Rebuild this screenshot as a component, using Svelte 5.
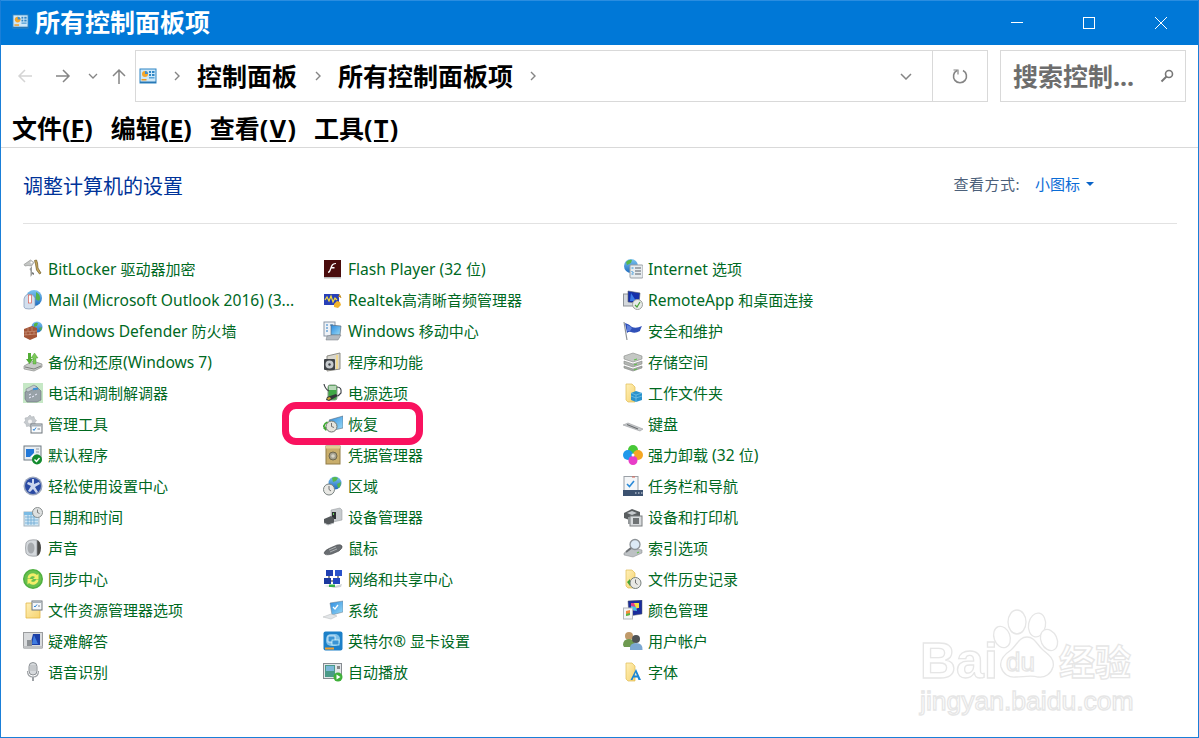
<script>
	const cp = `<rect x="0.5" y="1.5" width="17" height="15" fill="#2f86c6"/><rect x="1.5" y="2.5" width="15" height="13" fill="#cfe8f8"/><circle cx="6" cy="7" r="3" fill="#f4a62a"/><path d="M6 7V4a3 3 0 0 1 3 3z" fill="#3c8ed0"/><rect x="2.5" y="12" width="5" height="1.5" fill="#f09a20"/><rect x="10" y="4" width="2" height="2" fill="#2f86c6"/><rect x="13" y="4" width="2.5" height="2" fill="#2f86c6"/><rect x="10" y="7" width="2" height="2" fill="#2f86c6"/><rect x="13" y="7" width="2.5" height="2" fill="#2f86c6"/><rect x="10" y="10" width="5.5" height="1.5" fill="#5aa5da"/><rect x="1" y="14.5" width="16" height="1.5" fill="#2878b5"/>`;

	const folder = `<path d="M3 1h6l3 3v15H5l-2-2z" fill="url(#gFolder)" stroke="#e0bb55" stroke-width=".7"/>`;
	const clock = (x, y, r) => `<circle cx="${x}" cy="${y}" r="${r}" fill="#e8e8e4" stroke="#77807f" stroke-width="1"/><path d="M${x} ${y - r + 2}V${y}l2 1.5" fill="none" stroke="#555" stroke-width=".8"/>`;

	const icons = {
		bitlocker: `<path d="M1 5.5 7.5 1l3.5 2.5-2.500 3.500L5 6.500 2 7z" fill="#c4c6c4" stroke="#8b8d8b" stroke-width=".6"/><circle cx="8.500" cy="3.500" r="1.100" fill="#fff"/><path d="M11.500 1.500 13.500 1l1 3 .5 5 3 5-1.500 1-3-4-1-6z" fill="#c7a75c" stroke="#6d5a25" stroke-width=".7"/><path d="M9 7v9l-1.500 2V12l-1-2z" fill="#9a9c9a"/><path d="M9 13l2 1v2l-2-1z" fill="#7b7d7b"/>`,
		mail: `<circle cx="11" cy="8" r="8" fill="url(#gBlue)"/><path d="M13 2q4 2 4 6t-3 2q-2-1-1-4z" fill="#55b34b"/><path d="M1 9q0-3 4-5l5 1 2 3v9q-1 2-6 2T1 17z" fill="#d3dfee" stroke="#7f95b5" stroke-width=".7"/><rect x="5.500" y="5" width="3" height="8" fill="#fff" stroke="#d85c50" stroke-width=".7"/>`,
		defender: `<circle cx="14" cy="6" r="5.500" fill="url(#gBlue)"/><path d="M11 3q2-2 4-1l-1 3-3 1zM16 7l3-1-1 4z" fill="#53b347"/><path d="M1 8l8-3 5 2v9l-7 3-6-3z" fill="#a35538"/><path d="M1 11l13-1M1 14l13-1M5 7v3M9 6v4M3 11v3M7 11v3M11 10v3" stroke="#d2a18a" stroke-width=".6" fill="none"/>`,
		backup: `<path d="M1 14l9-5 9 3v3l-8 4-10-2z" fill="#c8cbc8" stroke="#7c7e7c" stroke-width=".6"/><path d="M2 15l9 2 7-3" stroke="#696b69" stroke-width=".8" fill="none"/><path d="M5 1h3v6h2l-3.500 5L3 7h2z" fill="#52ad35"/><path d="M13 12h-3V6H8l3.500-5L15 6h-2z" fill="#7cc95a" stroke="#3f8f28" stroke-width=".4"/>`,
		phone: `<rect width="20" height="20" fill="#c6e8c6"/><path d="M2 9l11-6 5 5v9l-4 2H4l-2-3z" fill="#98a2a8" stroke="#687076" stroke-width=".6"/><path d="M3 6l8-4 4 3-2 2-2-1-6 3-2-1z" fill="#c4ccd0" stroke="#687076" stroke-width=".5"/><rect x="10" y="5" width="5" height="2" transform="rotate(-8 12 6)" fill="#3a92d8"/><path d="M6 12l2-1M9 14l2-1M12 12l2-1M6 15l2-1" stroke="#eef" stroke-width="1"/>`,
		tools: `<path d="M7 1l1.500 2 2.500-.5.5 2.500 2 1.500-1.500 2 .5 2.500-2.500.5L8 13.500 6 12l-2.500.5L3 10 1 8.500l1.500-2L2 4l2.500-.5z" fill="#c6cace" stroke="#a5aaae" stroke-width=".5"/><circle cx="7" cy="7.500" r="2" fill="#f4f4f4"/><rect x="8" y="10" width="11" height="9" fill="#f8fafc" stroke="#6f767c"/><rect x="8.500" y="10.500" width="10" height="2" fill="#a9b1b8"/><path d="M10 15l1 1.500 2-3" stroke="#2f86d8" stroke-width="1" fill="none"/><path d="M14.500 15H17" stroke="#7b8288"/>`,
		defaults: `<rect x="1" y="1" width="17" height="14" fill="#e8edf2" stroke="#6f7a82"/><rect x="3" y="4" width="8" height="8" fill="#2278d8"/><path d="M7 12l4-4v4z" fill="#fff"/><path d="M13 4h3M13 7h3M13 10h2" stroke="#8f9aa3"/><circle cx="14" cy="14.500" r="5" fill="#128b2e"/><path d="M11.500 14.500l2 2 3-3.500" stroke="#fff" stroke-width="1.400" fill="none"/>`,
		ease: `<circle cx="10" cy="10" r="9.500" fill="#9ba6bd"/><circle cx="10" cy="10" r="8" fill="#2a4aa4"/><path d="M9 3h2v5l5-2 1 2-5 3 3 5-2 1-3-4-3 3-2-1 3-5-4-2 1-2 4 1z" fill="#e9eefb" opacity=".85"/>`,
		datetime: `<rect x="1" y="5" width="15" height="14" fill="#cfe6f4" stroke="#a7b6c0"/><rect x="1" y="5" width="15" height="3" fill="#7bbbe4"/><path d="M2 10h13M2 13h13M2 16h13M5 8v10M8 8v10M11 8v10" stroke="#6da9d4" stroke-width=".8"/><circle cx="14.500" cy="5.500" r="5" fill="#dde0e0" stroke="#8a8f8f"/><path d="M14.500 2.500v3l2 1" stroke="#666" fill="none" stroke-width=".8"/>`,
		sound: `<ellipse cx="13.500" cy="10" rx="4.500" ry="8" fill="#4a4a48"/><path d="M14 2Q5 1 3 5q-1 5 0 10 2 4 11 3z" fill="#d4d8dc" stroke="#8c9095" stroke-width=".7"/><ellipse cx="8" cy="10" rx="3.500" ry="5.500" fill="#a6aaae"/>`,
		sync: `<circle cx="10" cy="10" r="10" fill="#4fb040"/><circle cx="10" cy="10" r="8.500" fill="#68c04e"/><path d="M4.500 9.500A5.500 5.500 0 0 1 14 6l1.500-1.500V10H10l2-2a3 3 0 0 0-5 1.500z" fill="#f3ee6a"/><path d="M15.500 10.500A5.500 5.500 0 0 1 6 14l-1.500 1.500V10H10l-2 2a3 3 0 0 0 5-1.500z" fill="#f3ee6a"/>`,
		explorer: `<path d="M3 3h14v15H3z" fill="url(#gFolder)" stroke="#e3b848" stroke-width=".8"/><rect x="9" y="1" width="10" height="9" fill="#f4f7fa" stroke="#6f767c"/><rect x="9.500" y="1.500" width="9" height="1.500" fill="#a9b1b8"/><path d="M11 6l1 1 2-2.500" stroke="#2f86d8" fill="none"/><path d="M15 6h2" stroke="#7b8288"/>`,
		trouble: `<rect x="0.500" y="1.500" width="19" height="15" fill="#d9dbdd" stroke="#9b9d9f"/><path d="M10 3h7v11H4l4-3z" fill="#1c3fa6"/><path d="M11 4l4 9h-6z" fill="#3f7be0"/><rect x="4" y="9" width="5" height="7" fill="#8d9195"/><rect x="0.500" y="15" width="19" height="3" fill="#bfc1c3"/>`,
		speech: `<rect x="6" y="0.500" width="8" height="12.500" rx="4" fill="#d7dadd" stroke="#8d9195"/><path d="M7 4h6M7 6h6M7 8h6" stroke="#a6aaae" stroke-width=".7"/><path d="M4.500 9q0 6 5.500 6t5.500-6" fill="none" stroke="#9ea2a6" stroke-width="1.200"/><path d="M10 15v4" stroke="#9ea2a6" stroke-width="2"/>`,
		flash: `<rect x="1" y="1" width="17" height="17" fill="#4a0c0c"/><rect x="1" y="18" width="17" height="1.500" fill="#bbb"/><path d="M13 5q-3 0-4 3l-1.500 4Q7 14 5 14v-1.500q1 0 1.500-1.500l1.500-4q1-3 5-3zM7.500 8h4v1.500h-4z" fill="#fff"/>`,
		realtek: `<rect x="1" y="4" width="15" height="11" fill="#2840b8"/><path d="M2 10l2-3 2 4 2-5 2 6 2-4 2 2" stroke="#f6dc3c" stroke-width="1.200" fill="none"/><path d="M11 14l3-3 3 1 1 3-3 3-4-1z" fill="#f2b32c"/><path d="M16 4l2 4M18 6l-3 1" stroke="#c48a18"/>`,
		mobility: `<rect x="1" y="1" width="11" height="14" fill="#eef2f7" stroke="#8a98a8"/><path d="M3 4h2M3 7h2M3 10h2M7 4h3" stroke="#2a7ec6"/><path d="M8 4l10 1-1 9H8z" fill="url(#gScreen)" stroke="#58606a" stroke-width=".6"/><path d="M4 15l5-1h9l-3 5H3z" fill="#b4bac0" stroke="#747a80" stroke-width=".5"/>`,
		programs: `<path d="M4 4l13-3v16l-13 2z" fill="#d8d6ce" stroke="#8e8d86"/><path d="M14 3v14" stroke="#f0d890" stroke-width="2"/><rect x="1" y="7" width="11" height="11" rx="1" fill="#3f4347"/><circle cx="6.500" cy="12.500" r="4" fill="#c7cbce"/><circle cx="6.500" cy="12.500" r="1.200" fill="#3f4347"/>`,
		power: `<rect x="5" y="2" width="9" height="15" rx="2" fill="#3fa845" stroke="#8a9a8c"/><rect x="6" y="3" width="7" height="4" fill="#b8d8b8"/><path d="M1 1q1 5 5 7M14 4q5 0 4 6l-3 3" stroke="#3f4347" fill="none" stroke-width="1.200"/><path d="M4 14l9-3 2 2-9 5-3-1z" fill="#33373a"/><path d="M4 15l3-1 1 2-3 1z" fill="#c9a53a"/>`,
		recovery: `<path d="M6 6l14-4v12l-9 2z" fill="url(#gScreen)" stroke="#5c6c7c" stroke-width=".6"/><path d="M2 12l-2 2 3 3 1-2z" fill="#3da82f"/><circle cx="8.500" cy="12.500" r="5.500" fill="#e4e4dc" stroke="#6f7570"/><path d="M8.500 9v3.500l2.500 1" stroke="#555" fill="none" stroke-width=".8"/><path d="M0.500 13q1-4 4-5" stroke="#3da82f" stroke-width="1.600" fill="none"/>`,
		credentials: `<rect x="3" y="1" width="14" height="18" fill="#c9ae6c" stroke="#927c46"/><rect x="3" y="1" width="14" height="2.500" fill="#e2cd92"/><circle cx="10" cy="11" r="4" fill="#a4a090" stroke="#70684c"/><circle cx="10" cy="11" r="1.800" fill="#d8d4c4"/>`,
		region: `<circle cx="12" cy="7" r="6.500" fill="url(#gBlue)"/><path d="M9 2q3-2 6 0l-2 3-3 1zM14 8l4-2-1 5-2 1z" fill="#55b74a"/>${clock(6, 13.500, 5.500)}`,
		devices: `<path d="M8 3l9-2 2 2v10l-9 2-2-2z" fill="#c7cbce" stroke="#8e9296" stroke-width=".5"/><rect x="9" y="5" width="4" height="7" fill="#2e3234"/><rect x="10" y="6" width="1" height="2" fill="#69d060"/><path d="M1 12l7-3 3 2v5l-6 2-4-2z" fill="#55595c"/><path d="M1 16l4 2 6-2" stroke="#bfc3c6" fill="none"/>`,
		mouse: `<path d="M1 15q1-3 6-5l7-3q4-1 5 1t-3 5l-7 3q-7 2-8-1z" fill="#6a6e72" stroke="#44484b" stroke-width=".6"/><path d="M6 12l7-3M7 14l7-3" stroke="#a9adb0" stroke-width="1"/>`,
		network: `<rect x="3" y="1" width="7" height="6" fill="#1f3fb2"/><rect x="12" y="1" width="7" height="6" fill="#2a53cc"/><rect x="1" y="9" width="7" height="6" fill="#1b389e"/><rect x="10" y="9" width="7" height="6" fill="#2145bd"/><path d="M6 7v2M15 7v2M8 12h2" stroke="#222"/><path d="M1 17l8-1 3 1 7-2-1 3-7 1-3-1z" fill="#cfd3d6"/><rect x="6" y="15.500" width="6" height="2.500" fill="#35b04a"/>`,
		system: `<path d="M7 3l13-2v11l-11 3z" fill="url(#gScreen)" stroke="#6c7a88" stroke-width=".5"/><path d="M10 7l2 2 3-4" stroke="#fff" stroke-width="1.300" fill="none"/><path d="M0 17l8-3 6 2-6 3z" fill="#e3e6e8" stroke="#b4b8ba" stroke-width=".5"/>`,
		intel: `<rect x="0.500" y="0.500" width="19" height="19" rx="2" fill="#1c80c8"/><rect x="3" y="3" width="14" height="12" rx="5" fill="#7fc0e8"/><rect x="5" y="5" width="7" height="6" fill="#3a94d4" stroke="#fff" stroke-width=".7"/><rect x="9" y="9" width="7" height="5" fill="#3a94d4" stroke="#dff" stroke-width=".7"/><rect x="2" y="16.500" width="9" height="2" fill="#f0a030"/>`,
		autoplay: `<rect x="0.500" y="1.500" width="18" height="15" fill="#e3e6e9" stroke="#878c91"/><rect x="2" y="3" width="10" height="12" fill="#4a9a88"/><rect x="3" y="4" width="8" height="5" fill="#7cb8d8"/><rect x="14" y="4" width="3" height="3" fill="#888"/><circle cx="15" cy="15" r="4.500" fill="#3fb03a"/><path d="M13.500 12.500l4 2.500-4 2.500z" fill="#fff"/>`,
		internet: `<circle cx="8" cy="7" r="7" fill="url(#gBlue)"/><path d="M3 3q3-3 6-2l-1 3-4 2zM8 8l5-1-1 5-3 1z" fill="#57b84a"/><rect x="7" y="6" width="13" height="13" rx="1" fill="#e8ecef" stroke="#9aa0a5"/><path d="M12 9h6M12 12h6M12 15h6" stroke="#58606a"/><path d="M8.500 9h2M8.500 12l2 2M8.500 15h2" stroke="#2a8fd8"/>`,
		remoteapp: `<rect x="0.500" y="4" width="15" height="12" fill="#d4d8dc" stroke="#8e9398"/><path d="M5 1l12 2-1 10-11-1z" fill="#1430aa" stroke="#5a6068" stroke-width=".6"/><path d="M8 3l5 8H7z" fill="#3b7be6"/><circle cx="14.500" cy="14.500" r="5" fill="#e8eae8" stroke="#9da09d"/><path d="M12 15l2 2 3-5" stroke="#4aa23a" stroke-width="1.200" fill="none"/>`,
		security: `<path d="M1 1l3 18" stroke="#8e9398" stroke-width="1.200"/><path d="M2 2q4 1 7 4 4 2 10-1-2 4-2 5-5 3-9 1-2-1-4 1z" fill="#3050b8"/><path d="M4 4q3 1 5 3l-2 3-3 0z" fill="#5f80dc"/>`,
		storage: `<path d="M1 4l9-3 9 3v3l-9 3-9-3z" fill="#c4c7c4" stroke="#878a87" stroke-width=".6"/><path d="M1 9l9 3 9-3v3l-9 3-9-3z" fill="#b2b5b2" stroke="#878a87" stroke-width=".6"/><path d="M1 14l9 3 9-3v2l-9 3-9-3z" fill="#a6a9a6" stroke="#878a87" stroke-width=".6"/><path d="M11 8l3-1M11 13l3-1M11 18l3-1" stroke="#5fc04a" stroke-width="1.200"/>`,
		workfolders: `${folder}<path d="M13 8l6 2v7l-6 2-5-2v-7z" fill="#2a92cc"/><path d="M8 10l5 2 6-2M13 12v7M8 13l5 2 6-2" stroke="#86ccee" stroke-width=".6" fill="none"/>`,
		keyboard: `<path d="M0 11l5-2 15 6-3 2z" fill="#c8cbcd" stroke="#8a8d90" stroke-width=".5"/><path d="M4 10.500l11 4.500" stroke="#6a6d70" stroke-width="1.200"/>`,
		uninstall: `<circle cx="10" cy="5" r="5" fill="#48c838"/><circle cx="5" cy="10" r="5" fill="#1f98ea"/><circle cx="15" cy="10" r="5" fill="#f5a623"/><circle cx="10" cy="15.500" r="4.500" fill="#e83cc8"/><circle cx="10" cy="10" r="1.500" fill="#fff"/>`,
		taskbar: `<rect x="1" y="0.500" width="14" height="15" fill="#f4f6f8" stroke="#9aa0a6"/><path d="M4 8l2.500 2.500L11 5" stroke="#2a8ad8" stroke-width="1.600" fill="none"/><rect x="9" y="0.500" width="3" height="1" fill="#d86050"/><rect y="14" width="20" height="6" fill="#3c5270"/><path d="M12 17h1.500M15 17h1.500M18 17h1.500" stroke="#aab6c6" stroke-width="1.500"/>`,
		printers: `<path d="M1 6l8-4 8 3v6l-8 3-8-3z" fill="#5a5e60"/><path d="M4 6l5-2 5 2-5 2z" fill="#c6cace"/><rect x="7" y="9" width="12" height="10" fill="#d7dadc" stroke="#7a7e80"/><rect x="10" y="11" width="6" height="6" fill="#6e7274"/><rect x="5" y="10" width="2" height="7" fill="#94989a"/>`,
		index: `<path d="M1 15l9-5 9 2v3l-9 4-9-2z" fill="#bdc1c4" stroke="#83878a" stroke-width=".5"/><circle cx="12" cy="6.500" r="5" fill="#dceaf6" stroke="#8d9398" stroke-width="1.300"/><path d="M8 10l-5 4" stroke="#6e7276" stroke-width="2"/><path d="M14 15l2-1" stroke="#5fc04a" stroke-width="1.200"/>`,
		history: `${folder}<path d="M4 13l3-3v2h3v3H7v2z" fill="#3da82f"/>${clock(12.500, 14, 5.500)}`,
		color: `<path d="M5 1l14-1v14l-13 2z" fill="#1a2c9c" stroke="#5a6068" stroke-width=".5"/><path d="M8 3h7v5l-4 3-3-3z" fill="#e23c8c"/><path d="M11 3h5v5h-3z" fill="#f2e040"/><path d="M8 6l5 1 1 4-6-1z" fill="#44c4e4"/><rect x="0.500" y="8" width="9" height="11" fill="#f4f6f8" stroke="#b4b8bc"/><path d="M3 11l4-1v5l-4 1z" fill="#f28c3c"/><path d="M3 14l4-1v2l-4 1z" fill="#52b848"/>`,
		users: `<circle cx="6" cy="5" r="4" fill="#c09a6a"/><path d="M0 14q0-6 6-6t6 6l-1 2H1z" fill="#6e9a50"/><circle cx="13" cy="8" r="4" fill="#4e5256"/><path d="M7 19q-1-7 6-7t6.500 7z" fill="#7ca8d2"/>`,
		fonts: `${folder}<path d="M13 7l5 11h-2.500l-1-2.500h-4L9.500 18H7.500zM11.400 13.500h2.400L12.700 10.500z" fill="#1a86d6"/>`
	};

	const columns = [
		[
			['bitlocker', 'BitLocker 驱动器加密'],
			['mail', 'Mail (Microsoft Outlook 2016) (3...'],
			['defender', 'Windows Defender 防火墙'],
			['backup', '备份和还原(Windows 7)'],
			['phone', '电话和调制解调器'],
			['tools', '管理工具'],
			['defaults', '默认程序'],
			['ease', '轻松使用设置中心'],
			['datetime', '日期和时间'],
			['sound', '声音'],
			['sync', '同步中心'],
			['explorer', '文件资源管理器选项'],
			['trouble', '疑难解答'],
			['speech', '语音识别']
		],
		[
			['flash', 'Flash Player (32 位)'],
			['realtek', 'Realtek高清晰音频管理器'],
			['mobility', 'Windows 移动中心'],
			['programs', '程序和功能'],
			['power', '电源选项'],
			['recovery', '恢复'],
			['credentials', '凭据管理器'],
			['region', '区域'],
			['devices', '设备管理器'],
			['mouse', '鼠标'],
			['network', '网络和共享中心'],
			['system', '系统'],
			['intel', '英特尔® 显卡设置'],
			['autoplay', '自动播放']
		],
		[
			['internet', 'Internet 选项'],
			['remoteapp', 'RemoteApp 和桌面连接'],
			['security', '安全和维护'],
			['storage', '存储空间'],
			['workfolders', '工作文件夹'],
			['keyboard', '键盘'],
			['uninstall', '强力卸载 (32 位)'],
			['taskbar', '任务栏和导航'],
			['printers', '设备和打印机'],
			['index', '索引选项'],
			['history', '文件历史记录'],
			['color', '颜色管理'],
			['users', '用户帐户'],
			['fonts', '字体']
		]
	];

	const menus = [
		['文件', 'F'],
		['编辑', 'E'],
		['查看', 'V'],
		['工具', 'T']
	];

	// latin runs are a touch wider than the cjk ones in the original font
	const runs = (label) => label.split(/([\u4e00-\u9fff]+)/).filter(Boolean);
	const isCjk = (run) => /[\u4e00-\u9fff]/.test(run);
</script>

<svg class="defs" width="0" height="0" aria-hidden="true">
	<defs>
		<linearGradient id="gBlue" x1="0" y1="0" x2="0" y2="1">
			<stop offset="0" stop-color="#7ec4f0" />
			<stop offset="1" stop-color="#1d6cc0" />
		</linearGradient>
		<linearGradient id="gFolder" x1="0" y1="0" x2="1" y2="1">
			<stop offset="0" stop-color="#fff0b8" />
			<stop offset="1" stop-color="#f6d370" />
		</linearGradient>
		<linearGradient id="gScreen" x1="0" y1="0" x2="1" y2="1">
			<stop offset="0" stop-color="#2a8ae0" />
			<stop offset="1" stop-color="#9cdcf6" />
		</linearGradient>
	</defs>
</svg>

<div class="window">
	<header class="titlebar">
		<svg class="title-icon" viewBox="0 0 18 18" width="17" height="17">{@html cp}</svg>
		<span class="title">所有控制面板项</span>
		<div class="caption">
			<svg viewBox="0 0 12 12" width="12" height="12"><path d="M0 5.500h12" stroke="#fff" fill="none" /></svg>
			<svg viewBox="0 0 12 12" width="12" height="12"><rect x=".5" y=".5" width="11" height="11" stroke="#fff" fill="none" /></svg>
			<svg viewBox="0 0 12 12" width="12" height="12"><path d="M0 0l12 12M12 0L0 12" stroke="#fff" fill="none" /></svg>
		</div>
	</header>

	<div class="nav">
		<div class="nav-buttons">
			<svg class="back" viewBox="0 0 16 14" width="16" height="14"><path d="M15 7H2M8 1L2 7l6 6" stroke="#d4d4d4" stroke-width="1.500" fill="none" /></svg>
			<svg class="forward" viewBox="0 0 16 14" width="16" height="14"><path d="M1 7h13M8 1l6 6-6 6" stroke="#858585" stroke-width="1.500" fill="none" /></svg>
			<svg class="recent" viewBox="0 0 10 6" width="10" height="6"><path d="M1 1l4 4 4-4" stroke="#858585" stroke-width="1.300" fill="none" /></svg>
			<svg class="up" viewBox="0 0 14 16" width="14" height="16"><path d="M7 16V2M1 8l6-6 6 6" stroke="#858585" stroke-width="1.500" fill="none" /></svg>
		</div>
		<div class="address">
			<svg class="addr-icon" viewBox="0 0 18 18" width="18" height="18">{@html cp}</svg>
			<span class="sep"><svg viewBox="0 0 6 10" width="6" height="10"><path d="M1 1l4 4-4 4" stroke="#858585" stroke-width="1.400" fill="none" /></svg></span>
			<span class="crumb">控制面板</span>
			<span class="sep sep-mid"><svg viewBox="0 0 6 10" width="6" height="10"><path d="M1 1l4 4-4 4" stroke="#858585" stroke-width="1.400" fill="none" /></svg></span>
			<span class="crumb">所有控制面板项</span>
			<span class="sep"><svg viewBox="0 0 6 10" width="6" height="10"><path d="M1 1l4 4-4 4" stroke="#858585" stroke-width="1.400" fill="none" /></svg></span>
			<span class="addr-drop"><svg viewBox="0 0 12 7" width="12" height="7"><path d="M1 1l5 5 5-5" stroke="#858585" stroke-width="1.500" fill="none" /></svg></span>
			<span class="refresh">
				<svg viewBox="0 0 16 16" width="16" height="16"><path d="M5 2.500A6.500 6.500 0 1 0 11 2.500" stroke="#858585" stroke-width="1.600" fill="none" /><path d="M1.500 2h4.500v4.500" stroke="#858585" stroke-width="1.200" fill="none" /></svg>
			</span>
		</div>
		<div class="search">
			<span class="search-text">搜索控制...</span>
			<svg viewBox="0 0 14 14" width="14" height="14"><circle cx="9" cy="5" r="3.500" stroke="#777" stroke-width="1.600" fill="none" /><path d="M6.500 7.500L1.500 12.500" stroke="#777" stroke-width="2" /></svg>
		</div>
	</div>

	<nav class="menubar">
		{#each menus as [name, key]}
			<span class="menu">{name}(<u class:wide={key === 'V' || key === 'T'}>{key}</u>)</span>
		{/each}
	</nav>

	<main class="content">
		<div class="head">
			<h1>调整计算机的设置</h1>
			<div class="view">
				<span class="view-label">查看方式:</span>
				<span class="view-value">小图标</span>
				<svg viewBox="0 0 8 4" width="8" height="4"><path d="M0 0h8L4 4z" fill="#0a64c8" /></svg>
			</div>
		</div>
		<div class="items">
			{#each columns as column}
				{#each column as [icon, label]}
					<div class="item">
						<svg viewBox="0 0 20 20" width="20" height="20">{@html icons[icon]}</svg>
						<span class="label">{#each runs(label) as run}<span class:latin={!isCjk(run)}>{run}</span>{/each}</span>
					</div>
				{/each}
			{/each}
		</div>
	</main>

	<div class="highlight"></div>

	<svg class="watermark" viewBox="0 0 260 130" width="260" height="130">
		<g fill="#fff" stroke="#e6e6e6" stroke-width="1.300">
			<text class="wm-big" x="20" y="78">Bai</text>
			<ellipse cx="117" cy="22" rx="9" ry="12" />
			<ellipse cx="137" cy="25" rx="8.500" ry="12" transform="rotate(10 137 25)" />
			<ellipse cx="102" cy="37" rx="8" ry="11" transform="rotate(-20 102 37)" />
			<ellipse cx="149" cy="40" rx="8" ry="11" transform="rotate(-25 149 40)" />
			<path d="M127 37c-8 0-10 8-16 13-6 4-12 9-10 17 2 7 8 11 15 10 7 0 15-2 22 0 7 1 13-3 15-10 2-8-5-13-10-17-6-5-8-13-16-13z" />
			<text class="wm-du" x="106" y="71">du</text>
			<text class="wm-cjk" x="159" y="76">经验</text>
			<text class="wm-url" x="20" y="110">jingyan.baidu.com</text>
		</g>
	</svg>
</div>

<style>
	:global(body) {
		margin: 0;
		background: #fff;
	}

	.defs {
		position: absolute;
	}

	.window {
		position: relative;
		box-sizing: border-box;
		width: 1199px;
		height: 738px;
		overflow: hidden;
		display: flex;
		flex-direction: column;
		background: #fff;
		border: 1px solid #1a7fd8;
		border-top: none;
		font-family: "Noto Sans", "Noto Sans CJK SC", sans-serif;
		color: #000;
	}

	.titlebar {
		flex: 0 0 45px;
		display: flex;
		align-items: center;
		padding-left: 11px;
		background: #0078d7;
		color: #fff;
		border-top: 1px solid #2a8de0;
		box-sizing: border-box;
	}

	.title-icon {
		margin-right: 6px;
		margin-top: -4px;
	}

	.title {
		font-size: 25px;
		font-weight: 700;
		line-height: 1;
		margin-top: -2px;
	}

	.caption {
		margin-left: auto;
		display: flex;
		gap: 60px;
		padding-right: 31px;
		margin-top: -1px;
	}

	.caption svg {
		display: block;
	}

	.nav {
		flex: 0 0 62px;
		display: flex;
		padding: 5px 12px 5px 0;
		box-sizing: border-box;
	}

	.nav-buttons {
		flex: 0 0 134px;
		display: flex;
		align-items: center;
	}

	.back {
		margin-left: 16px;
	}

	.forward {
		margin-left: 22px;
	}

	.recent {
		margin-left: 17px;
	}

	.up {
		margin-left: 14px;
	}

	.address {
		flex: 0 0 853px;
		margin-right: 12px;
		box-sizing: border-box;
		display: flex;
		align-items: center;
		border: 1px solid #d9d9d9;
		padding-left: 3px;
	}

	.addr-icon {
		flex: none;
	}

	.sep {
		width: 40px;
		display: flex;
		justify-content: center;
	}

	.sep-mid {
		width: 41px;
	}

	.crumb {
		font-size: 25px;
		font-weight: 700;
		line-height: 1;
	}

	.addr-drop {
		margin-left: auto;
		width: 52px;
		display: flex;
		justify-content: center;
	}

	.refresh {
		width: 54px;
		height: 100%;
		border-left: 1px solid #d9d9d9;
		display: flex;
		align-items: center;
		justify-content: center;
	}

	.search {
		flex: 1;
		box-sizing: border-box;
		display: flex;
		align-items: center;
		justify-content: space-between;
		border: 1px solid #d9d9d9;
		padding: 0 11px 0 12px;
	}

	.search-text {
		font-size: 25px;
		font-weight: 700;
		color: #6d6d6d;
		line-height: 1;
		white-space: nowrap;
	}

	.menubar {
		flex: 0 0 41px;
		box-sizing: border-box;
		display: flex;
		align-items: center;
		padding: 2px 0 0 11px;
		border-bottom: 1px solid #d9d9d9;
	}

	.menu {
		font-size: 25px;
		font-weight: 700;
		line-height: 1;
		margin-right: 18px;
		white-space: nowrap;
	}

	.menu u.wide {
		padding: 0 1.500px;
	}

	.content {
		flex: 1;
		padding: 0 21px 0 22px;
	}

	.head {
		height: 76px;
		box-sizing: border-box;
		display: flex;
		align-items: center;
		justify-content: space-between;
		padding-right: 83px;
		border-bottom: 1px solid #e2e2e2;
	}

	h1 {
		margin: 0;
		font-size: 20px;
		font-weight: 400;
		color: #003399;
	}

	.view {
		display: flex;
		align-items: center;
		font-size: 15px;
		margin-top: -4px;
	}

	.view-label {
		color: #4c607a;
		margin-right: 15px;
		letter-spacing: .5px;
	}

	.view-value {
		color: #0a6cd6;
		margin-right: 6px;
	}

	.items {
		margin-top: 29px;
		display: grid;
		grid-template-rows: repeat(14, 31px);
		grid-template-columns: repeat(3, 300px);
		grid-auto-flow: column;
	}

	.item {
		display: flex;
		align-items: center;
		gap: 5px;
		font-size: 15px;
		color: #00691f;
		white-space: nowrap;
	}

	.item svg {
		flex: none;
	}

	.latin {
		font-size: 15.600px;
	}

	.highlight {
		position: absolute;
		left: 281px;
		top: 402px;
		width: 141px;
		height: 43px;
		box-sizing: border-box;
		border: 7px solid #f9125f;
		border-radius: 14px;
	}

	.watermark {
		position: absolute;
		left: 899px;
		top: 600px;
	}

	.wm-big {
		font: 700 50px "Liberation Sans", sans-serif;
	}

	.wm-du {
		font: 26px "Liberation Sans", sans-serif;
	}

	.wm-cjk {
		font: 700 36px "Noto Sans CJK SC", sans-serif;
	}

	.wm-url {
		font: 26.500px "Liberation Sans", sans-serif;
	}
</style>
